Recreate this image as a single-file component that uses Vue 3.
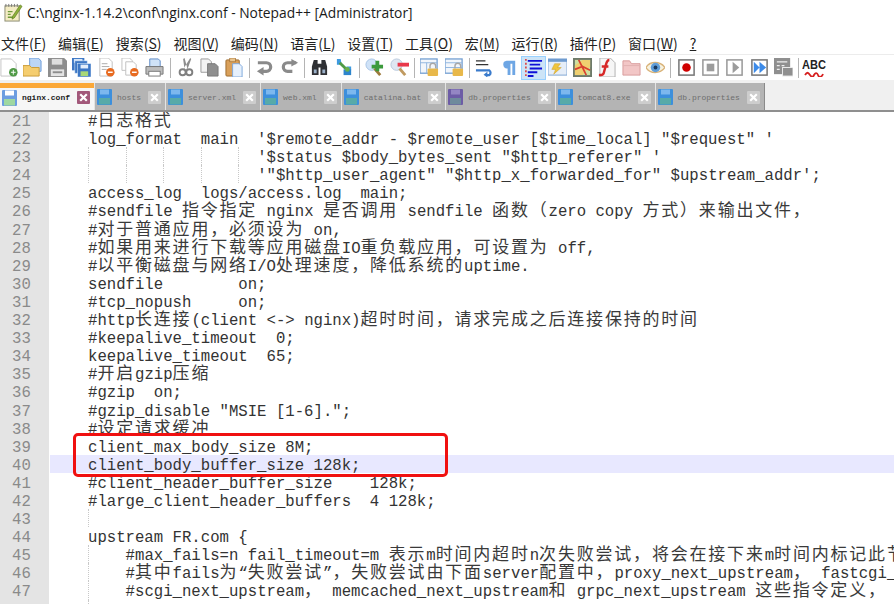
<script setup>
const menus = [
  ['文件(', 'F', ')'], ['编辑(', 'E', ')'], ['搜索(', 'S', ')'], ['视图(', 'V', ')'],
  ['编码(', 'N', ')'], ['语言(', 'L', ')'], ['设置(', 'T', ')'], ['工具(', 'O', ')'],
  ['宏(', 'M', ')'], ['运行(', 'R', ')'], ['插件(', 'P', ')'], ['窗口(', 'W', ')'], ['', '?', '']
]
const tabs = [
  { name: 'nginx.conf', active: true },
  { name: 'hosts' }, { name: 'server.xml' }, { name: 'web.xml' }, { name: 'catalina.bat' },
  { name: 'db.properties', ro: true }, { name: 'tomcat8.exe' }, { name: 'db.properties' }
]
const source = [
  [21, 0, '#日志格式'],
  [22, 0, `log_format  main  '$remote_addr - $remote_user [$time_local] "$request" '`],
  [23, 5, `'$status $body_bytes_sent "$http_referer" '`],
  [24, 5, `'"$http_user_agent" "$http_x_forwarded_for" $upstream_addr';`],
  [25, 0, 'access_log  logs/access.log  main;'],
  [26, 0, '#sendfile 指令指定 nginx 是否调用 sendfile 函数（zero copy 方式）来输出文件，'],
  [27, 0, '#对于普通应用，必须设为 on,'],
  [28, 0, '#如果用来进行下载等应用磁盘IO重负载应用，可设置为 off,'],
  [29, 0, '#以平衡磁盘与网络I/O处理速度，降低系统的uptime.'],
  [30, 0, 'sendfile        on;'],
  [31, 0, '#tcp_nopush     on;'],
  [32, 0, '#http长连接(client <-> nginx)超时时间，请求完成之后连接保持的时间'],
  [33, 0, '#keepalive_timeout  0;'],
  [34, 0, 'keepalive_timeout  65;'],
  [35, 0, '#开启gzip压缩'],
  [36, 0, '#gzip  on;'],
  [37, 0, '#gzip_disable "MSIE [1-6].";'],
  [38, 0, '#设定请求缓冲'],
  [39, 0, 'client_max_body_size 8M;'],
  [40, 0, 'client_body_buffer_size 128k;'],
  [41, 0, '#client_header_buffer_size    128k;'],
  [42, 0, '#large_client_header_buffers  4 128k;'],
  [43, 1, ''],
  [44, 0, 'upstream FR.com {'],
  [45, 1, '#max_fails=n fail_timeout=m 表示m时间内超时n次失败尝试，将会在接下来m时间内标记此节点'],
  [46, 1, '#其中fails为“失败尝试”，失败尝试由下面server配置中，proxy_next_upstream， fastcgi_next_upstream'],
  [47, 1, '#scgi_next_upstream， memcached_next_upstream和 grpc_next_upstream 这些指令定义，'],
  [48, 1, '']
]
const split = (t) => (t.match(/[\u3000-\u9fff\uff00-\uffef]+|[^\u3000-\u9fff\uff00-\uffef]+/g) || [])
  .map((s) => ({ s, cjk: /^[\u3000-\u9fff\uff00-\uffef]/.test(s) }))
const rows = source.map(([n, guides, text]) => ({ n, guides, parts: split(text), cur: n === 40 }))
</script>

<template>
  <div class="win">
    <div class="title">
      <svg class="appicon" viewBox="0 0 20 20">
        <rect x="1" y="3" width="15" height="16" fill="#f4ecc4" stroke="#8a8a70" />
        <path d="M2 1v3M5 1v3M8 1v3M11 1v3M14 1v3" stroke="#777" />
        <path d="M4 9h5M4 12h3M4 15h7" stroke="#6f9a3a" stroke-width="1.4" />
        <path d="M9 14L17 2l2 1.5L11 15.5 8.5 17z" fill="#8fb23a" stroke="#5d7a20" stroke-width=".7" />
      </svg>
      <span class="title-text">C:\nginx-1.14.2\conf\nginx.conf - Notepad++ [Administrator]</span>
    </div>

    <div class="menu">
      <span v-for="m in menus" :key="m[1]" class="menu-item">{{ m[0] }}<u>{{ m[1] }}</u>{{ m[2] }}</span>
    </div>

    <div class="toolbar">
      <div class="tb first"><svg viewBox="0 0 20 20"><path d="M1 1h11l5 5v13H1z" fill="#fff" stroke="#c4c4c4" /><circle cx="14" cy="15" r="4.5" fill="#4f9a45" /><path d="M14 12.5v5M11.5 15h5" stroke="#fff" /></svg></div>
      <div class="tb"><svg viewBox="0 0 20 20"><path d="M7 0h9l3 3v11H7z" fill="#bcd6f5" stroke="#6a9bd8" /><path d="M0 8h7l2 2h8v9H0z" fill="#f5cd6e" stroke="#c99a35" /></svg></div>
      <div class="tb"><svg viewBox="0 0 20 20"><path d="M0 0h17l3 3v17H0z" fill="#8d8d8d" /><rect x="4" y="1" width="11" height="6" fill="#dedede" /><rect x="3" y="12" width="14" height="7" fill="#e4e4e4" /><rect x="5" y="14" width="10" height="2" fill="#8d8d8d" /></svg></div>
      <div class="tb"><svg viewBox="0 0 20 20"><rect x="0" y="0" width="13" height="13" fill="#3d77c5" /><rect x="2" y="1" width="9" height="4" fill="#d6e6f8" /><rect x="3" y="3" width="13" height="13" fill="#3d77c5" stroke="#d6e6f8" stroke-width=".6" /><rect x="6" y="6" width="14" height="14" fill="#3d77c5" stroke="#d6e6f8" stroke-width=".6" /><rect x="9" y="7" width="8" height="4" fill="#e4eefa" /><rect x="9" y="14" width="8" height="5" fill="#a8d878" /></svg></div>
      <div class="tb"><svg viewBox="0 0 20 20"><path d="M3 0h9l4 4v15H3z" fill="#fff" stroke="#c0c0c0" /><path d="M5 6h6M5 9h8M5 12h5" stroke="#aaa" /><circle cx="14" cy="15" r="4.5" fill="#e86a1f" /><path d="M11.5 15h5" stroke="#fff" stroke-width="1.5" /></svg></div>
      <div class="tb"><svg viewBox="0 0 20 20"><path d="M1 0h8l3 3v10H1z" fill="#fff" stroke="#c0c0c0" /><path d="M5 4h8l3 3v11H5z" fill="#fff" stroke="#c0c0c0" /><circle cx="14" cy="15" r="4.5" fill="#e86a1f" /><path d="M11.5 15h5" stroke="#fff" stroke-width="1.5" /></svg></div>
      <div class="tb"><svg viewBox="0 0 20 20"><path d="M5 1h9l2 2v6H5z" fill="#cfe2f7" stroke="#5c8ac5" /><path d="M1 9h18v8H1z" fill="#bdbdbd" stroke="#777" /><rect x="4" y="14" width="12" height="5" fill="#fff" stroke="#777" /></svg></div>
      <i class="sep"></i>
      <div class="tb"><svg viewBox="0 0 20 20"><path d="M8 11L15 0l1 1-4 11M12 11L9 0 7.5 1l1.5 11" fill="#8d8d8d" /><circle cx="7" cy="15" r="3.2" fill="none" stroke="#808080" stroke-width="2" /><circle cx="14" cy="15" r="3.2" fill="none" stroke="#808080" stroke-width="2" /></svg></div>
      <div class="tb"><svg viewBox="0 0 20 20"><path d="M1 1h8l3 3v11H1z" fill="#f2f2f2" stroke="#999" /><path d="M8 6h8l3 3v10H8z" fill="#8f8f8f" stroke="#777" /></svg></div>
      <div class="tb"><svg viewBox="0 0 20 20"><rect x="1" y="2" width="14" height="17" rx="1" fill="#d9a05a" stroke="#9c6a2c" /><rect x="5" y="0" width="6" height="4" fill="#e9c48e" stroke="#9c6a2c" stroke-width=".7" /><path d="M8 6h7l3 3v11H8z" fill="#e6f0fc" stroke="#7ea8dc" /></svg></div>
      <i class="sep"></i>
      <div class="tb"><svg viewBox="0 0 20 20"><path d="M3 5h9a4 4 0 0 1 0 9H7" fill="none" stroke="#8a8a8a" stroke-width="3.4" /><path d="M9 9.5V18.5L2 14z" fill="#8a8a8a" /></svg></div>
      <div class="tb"><svg viewBox="0 0 20 20"><path d="M17 5H8a4 4 0 0 0 0 9h5" fill="none" stroke="#8a8a8a" stroke-width="3.4" /><path d="M12 1v8l7-4z" fill="#8a8a8a" /></svg></div>
      <i class="sep"></i>
      <div class="tb"><svg viewBox="0 0 20 20"><path d="M4 2h4v4h4V2h4l2 7v9h-7V10H9v8H2V9z" fill="#2f3034" /><path d="M4 12h3v4H4zM13 12h3v4h-3z" fill="#9ab0c8" /></svg></div>
      <div class="tb"><svg viewBox="0 0 20 20"><path d="M2 1h4l1 6 H2zM12 9h5v4h-5z" fill="#3d9ae0" /><path d="M5 5l8 8" stroke="#4f9a45" stroke-width="3" /><path d="M9 12h8v6H9z" fill="#2d85cc" /><circle cx="13" cy="12" r="2.5" fill="#6ab04c" /></svg></div>
      <i class="sep"></i>
      <div class="tb"><svg viewBox="0 0 20 20"><circle cx="7" cy="7" r="6" fill="#cfe2f7" stroke="#a8c4e6" /><path d="M10 11l6 7" stroke="#9c7a3c" stroke-width="3" /><path d="M11 3h4v4h4v4h-4v3h-4v-3H7V7h4z" fill="#3c9a3c" /></svg></div>
      <div class="tb"><svg viewBox="0 0 20 20"><circle cx="7" cy="7" r="6" fill="#dfe7f2" stroke="#b8c8dc" /><path d="M10 11l6 7" stroke="#c09a60" stroke-width="3" /><rect x="8" y="5" width="12" height="4" fill="#e8384a" /></svg></div>
      <i class="sep"></i>
      <div class="tb"><svg viewBox="0 0 20 20"><rect x="0" y="1" width="18" height="15" fill="#f2f6fb" stroke="#6e9bd0" stroke-width="1.3" /><path d="M0 5h18M7 5v11" stroke="#8fb4de" /><rect x="8" y="11" width="11" height="8" rx="1" fill="#e8b84a" /><path d="M10.5 11V8.5a3 3 0 0 1 6 0V11" fill="none" stroke="#a7a7a7" stroke-width="1.5" /></svg></div>
      <div class="tb"><svg viewBox="0 0 20 20"><rect x="0" y="1" width="18" height="15" fill="#f2f6fb" stroke="#6e9bd0" stroke-width="1.3" /><path d="M0 5h18M0 10h18" stroke="#8fb4de" /><rect x="8" y="11" width="11" height="8" rx="1" fill="#e8b84a" /><path d="M10.5 11V8.5a3 3 0 0 1 6 0V11" fill="none" stroke="#a7a7a7" stroke-width="1.5" /></svg></div>
      <i class="sep"></i>
      <div class="tb"><svg viewBox="0 0 20 20"><path d="M1 3h10M1 7h13" stroke="#333" stroke-width="1.5" /><path d="M1 13h14a3 3 0 0 1 0 5h-3" fill="none" stroke="#3a7bcc" stroke-width="2.4" /><path d="M13 14.5v6l-4-3z" fill="#3a7bcc" /></svg></div>
      <div class="tb"><svg viewBox="0 0 20 20"><path d="M7 3h9v15h-3V6h-2v12H8v-7a4 4 0 0 1-1-8z" fill="#6ea6e4" /></svg></div>
      <div class="tb on"><svg viewBox="0 0 20 20"><path d="M2 1v18" stroke="#d33" stroke-dasharray="2 2" stroke-width="1.6" /><path d="M4 2h15v2H4zM6 6h11v2H6zM6 10h13v2H6zM4 14h10v2H4zM4 18h6v2H4z" fill="#1010d8" /></svg></div>
      <div class="tb"><svg viewBox="0 0 20 20"><rect x="0" y="1" width="20" height="17" fill="#e6eef8" stroke="#7ea4d2" /><rect x="0" y="1" width="20" height="3" fill="#6e9bd0" /><path d="M13 6H7l-3 6h4l-2 5 8-7h-4z" fill="#f0c53c" stroke="#c99a20" stroke-width=".5" /></svg></div>
      <div class="tb"><svg viewBox="0 0 20 20"><rect x="0" y="0" width="20" height="20" fill="#6e7a6a" /><rect x="2" y="2" width="16" height="16" fill="#cfe0a0" /><path d="M2 8l8-6h8v7l-8 9H2z" fill="#f0d070" /><path d="M6 2l8 16M2 12l8-3 8 4" stroke="#d94030" stroke-width="1.8" fill="none" /></svg></div>
      <div class="tb"><svg viewBox="0 0 20 20"><path d="M3 0h11l5 5v15H3z" fill="#f6f6f6" stroke="#b0b0b0" /><path d="M13 2c-3 0-3 3-4 7l-2 7c-.5 2-2 2-5 2M5 9h7" fill="none" stroke="#d72828" stroke-width="2.6" /></svg></div>
      <div class="tb"><svg viewBox="0 0 20 20"><path d="M1 3h7l2 3h9v12H1z" fill="#f2c6c6" stroke="#d89a9a" /><path d="M1 8h18" stroke="#e0b0b0" /></svg></div>
      <div class="tb"><svg viewBox="0 0 20 20"><path d="M0 10c4-7 15-7 20 0-5 7-16 7-20 0z" fill="#f7f2e0" stroke="#d9b37a" stroke-width="1.4" /><circle cx="10" cy="10" r="5" fill="#5f9dd8" /><circle cx="10" cy="10" r="2" fill="#1a3a60" /></svg></div>
      <i class="sep"></i>
      <div class="tb"><svg viewBox="0 0 20 20"><rect x="2" y="2" width="16" height="16" fill="#fff" stroke="#777" stroke-width="1.6" /><circle cx="10" cy="10" r="4.5" fill="#d00000" /></svg></div>
      <div class="tb"><svg viewBox="0 0 20 20"><rect x="2" y="2" width="16" height="16" fill="#fff" stroke="#999" stroke-width="1.6" /><rect x="6" y="6" width="8" height="8" fill="#9c9c9c" /></svg></div>
      <div class="tb"><svg viewBox="0 0 20 20"><rect x="2" y="2" width="16" height="16" fill="#fff" stroke="#999" stroke-width="1.6" /><path d="M8 4l7 6-7 6z" fill="#9c9c9c" /></svg></div>
      <div class="tb"><svg viewBox="0 0 20 20"><rect x="2" y="2" width="16" height="16" fill="#fff" stroke="#777" stroke-width="1.6" /><path d="M4 4l6 6-6 6zM10 4l7 6-7 6z" fill="#3d8be8" /></svg></div>
      <div class="tb"><svg viewBox="0 0 20 20"><rect x="0" y="0" width="17" height="17" fill="#8f8f8f" /><path d="M3 4h11M3 8h3M8 8h3M3 12h3" stroke="#eee" stroke-width="1.4" /><rect x="9" y="10" width="11" height="9" fill="#8f8f8f" stroke="#eee" /></svg></div>
      <i class="sep"></i>
      <div class="tb abc">
        <span>ABC</span>
        <svg viewBox="0 0 20 6"><path d="M1 4c2-3 3-3 5 0s3 2 4 0 3-3 4 0 4 2 5-1" fill="none" stroke="#d62020" stroke-width="1.8" /></svg>
      </div>
    </div>

    <div class="tabs">
      <div v-for="(t, i) in tabs" :key="i" class="tab" :class="{ active: t.active }">
        <svg class="disk" :class="{ ro: t.ro }" viewBox="0 0 15 16">
          <rect class="d-body" width="15" height="16" rx="1" />
          <rect class="d-top" x="3" y="0.5" width="9" height="5" />
          <rect class="d-bot" x="2" y="9" width="11" height="6.5" />
        </svg>
        <span class="tab-name">{{ t.name }}</span>
        <svg class="close" viewBox="0 0 13 13">
          <rect class="c-bg" width="13" height="13" rx="1" />
          <path d="M3.2 3.2l6.6 6.6M9.8 3.2l-6.6 6.6" stroke="#fff" stroke-width="2.2" />
        </svg>
      </div>
    </div>

    <div class="editor">
      <div v-for="r in rows" :key="r.n" class="row">
        <span class="num">{{ r.n }}</span>
        <div class="code" :class="{ cur: r.cur }">
          <i v-for="g in r.guides" :key="g" class="guide" :class="{ half: g === 5 }"></i>
          <template v-for="(p, i) in r.parts" :key="i">
            <span v-if="p.cjk" class="cjk">{{ p.s }}</span>
            <template v-else>{{ p.s }}</template>
          </template>
        </div>
      </div>
      <div class="mark"></div>
    </div>
  </div>
</template>

<style scoped>
.win {
  width: 894px;
  height: 604px;
  overflow: hidden;
  background: #fff;
  display: flex;
  flex-direction: column;
}
.title {
  height: 31px;
  flex: none;
  display: flex;
  align-items: center;
  padding-left: 4px;
  padding-bottom: 6px;
  box-sizing: border-box;
}
.appicon { width: 19px; height: 19px; flex: none; }
.title-text {
  margin-left: 4px;
  font: 13.8px "Open Sans", "Noto Sans", sans-serif;
  color: #1a1a1a;
}
.menu {
  height: 23px;
  flex: none;
  display: flex;
  align-items: center;
  gap: 11.9px;
  padding-left: 1px;
  font: 14px "Noto Sans CJK SC", "Noto Sans", sans-serif;
  color: #222;
  box-sizing: border-box;
}
.menu-item { white-space: nowrap; }
.toolbar {
  height: 29px;
  flex: none;
  box-sizing: border-box;
  border-top: 1px solid #ececec;
  border-bottom: 3px solid #f0f0f0;
  display: flex;
  align-items: center;
}
.tb {
  width: 24.4px;
  height: 24px;
  flex: none;
  display: flex;
  align-items: center;
  justify-content: center;
  box-sizing: border-box;
}
.tb.first { width: 20.8px; justify-content: flex-start; }
.tb svg { width: 19px; height: 19px; display: block; }
.tb.on { background: #cce4f7; border: 1px solid #99d1ff; }
.sep {
  width: 1px;
  height: 20px;
  margin: 0 2.6px;
  background: #b4b4b4;
  flex: none;
}
.abc { flex-direction: column; line-height: 1; }
.abc span { font: bold 13px/13px "Liberation Sans", sans-serif; color: #222; transform: scaleX(.85); }
.abc svg { width: 20px; height: 6px; }
.tabs {
  height: 29px;
  flex: none;
  background: #f0f0f0;
  display: flex;
  align-items: stretch;
  box-sizing: border-box;
  border-bottom: 2px solid #8f8f8f;
  position: relative;
  z-index: 1;
}
.tab {
  display: flex;
  align-items: center;
  padding: 1px 4px 0 2px;
  background: #b4b4b4;
  border-right: 1px solid #8a8a8a;
  border-left: 1px solid #e4e4e4;
  margin-left: -1px;
  box-sizing: content-box;
  flex: none;
}
.tab.active {
  background: #f6f6f6;
  border-top: 5px solid #fba838;
  border-left: none;
  margin-left: 0;
  padding-top: 0;
  padding-bottom: 3px;
}
.disk { width: 15px; height: 16px; flex: none; }
.d-body { fill: #3d8fdc; }
.d-top { fill: #7db8ee; }
.d-bot { fill: #58aaa8; }
.ro .d-body { fill: #6d5ca6; }
.ro .d-top { fill: #9486c4; }
.ro .d-bot { fill: #6e8a9c; }
.active .d-body { fill: #6c9de0; }
.active .d-top { fill: #ffffff; }
.active .d-bot { fill: #9fd8a0; }
.tab-name {
  margin: 0 7px 0 5px;
  font: 8px "Liberation Mono", monospace;
  color: #6e6e6e;
  white-space: pre;
}
.active .tab-name { color: #1c1c1c; font-weight: bold; }
.close { width: 13px; height: 13px; flex: none; }
.c-bg { fill: #cdcdcd; }
.active .c-bg { fill: #a2587a; }
.editor {
  position: relative;
  flex: none;
  margin-top: -1px;
  font: 15.67px/22px "Liberation Mono", "Noto Sans CJK SC", monospace;
  color: #333;
}
.row {
  height: 18.1px;
  display: flex;
}
.num {
  width: 49px;
  height: 100%;
  flex: none;
  box-sizing: border-box;
  background: #e4e4e4;
  color: #8a8a8a;
  padding-left: 12px;
}
.code {
  margin-left: 1px;
  flex: 1;
  min-width: 0;
  height: 18.1px;
  padding-left: 38px;
  white-space: pre;
  display: block;
}
.code.cur { background: #e8e8ff; }
.guide {
  display: inline-block;
  width: 37.6px;
  height: 18.1px;
  box-sizing: border-box;
  border-left: 1px dotted #c8c8c8;
  vertical-align: top;
}
.guide.half { width: 18.8px; }
.cjk {
  font: 17px/0 "Noto Sans CJK SC", sans-serif;
  letter-spacing: 1.8px;
  color: #3a3a3a;
}
.mark {
  position: absolute;
  left: 73px;
  top: 322px;
  width: 375px;
  height: 44px;
  box-sizing: border-box;
  border: 3px solid #f01010;
  border-radius: 5px;
}
</style>
